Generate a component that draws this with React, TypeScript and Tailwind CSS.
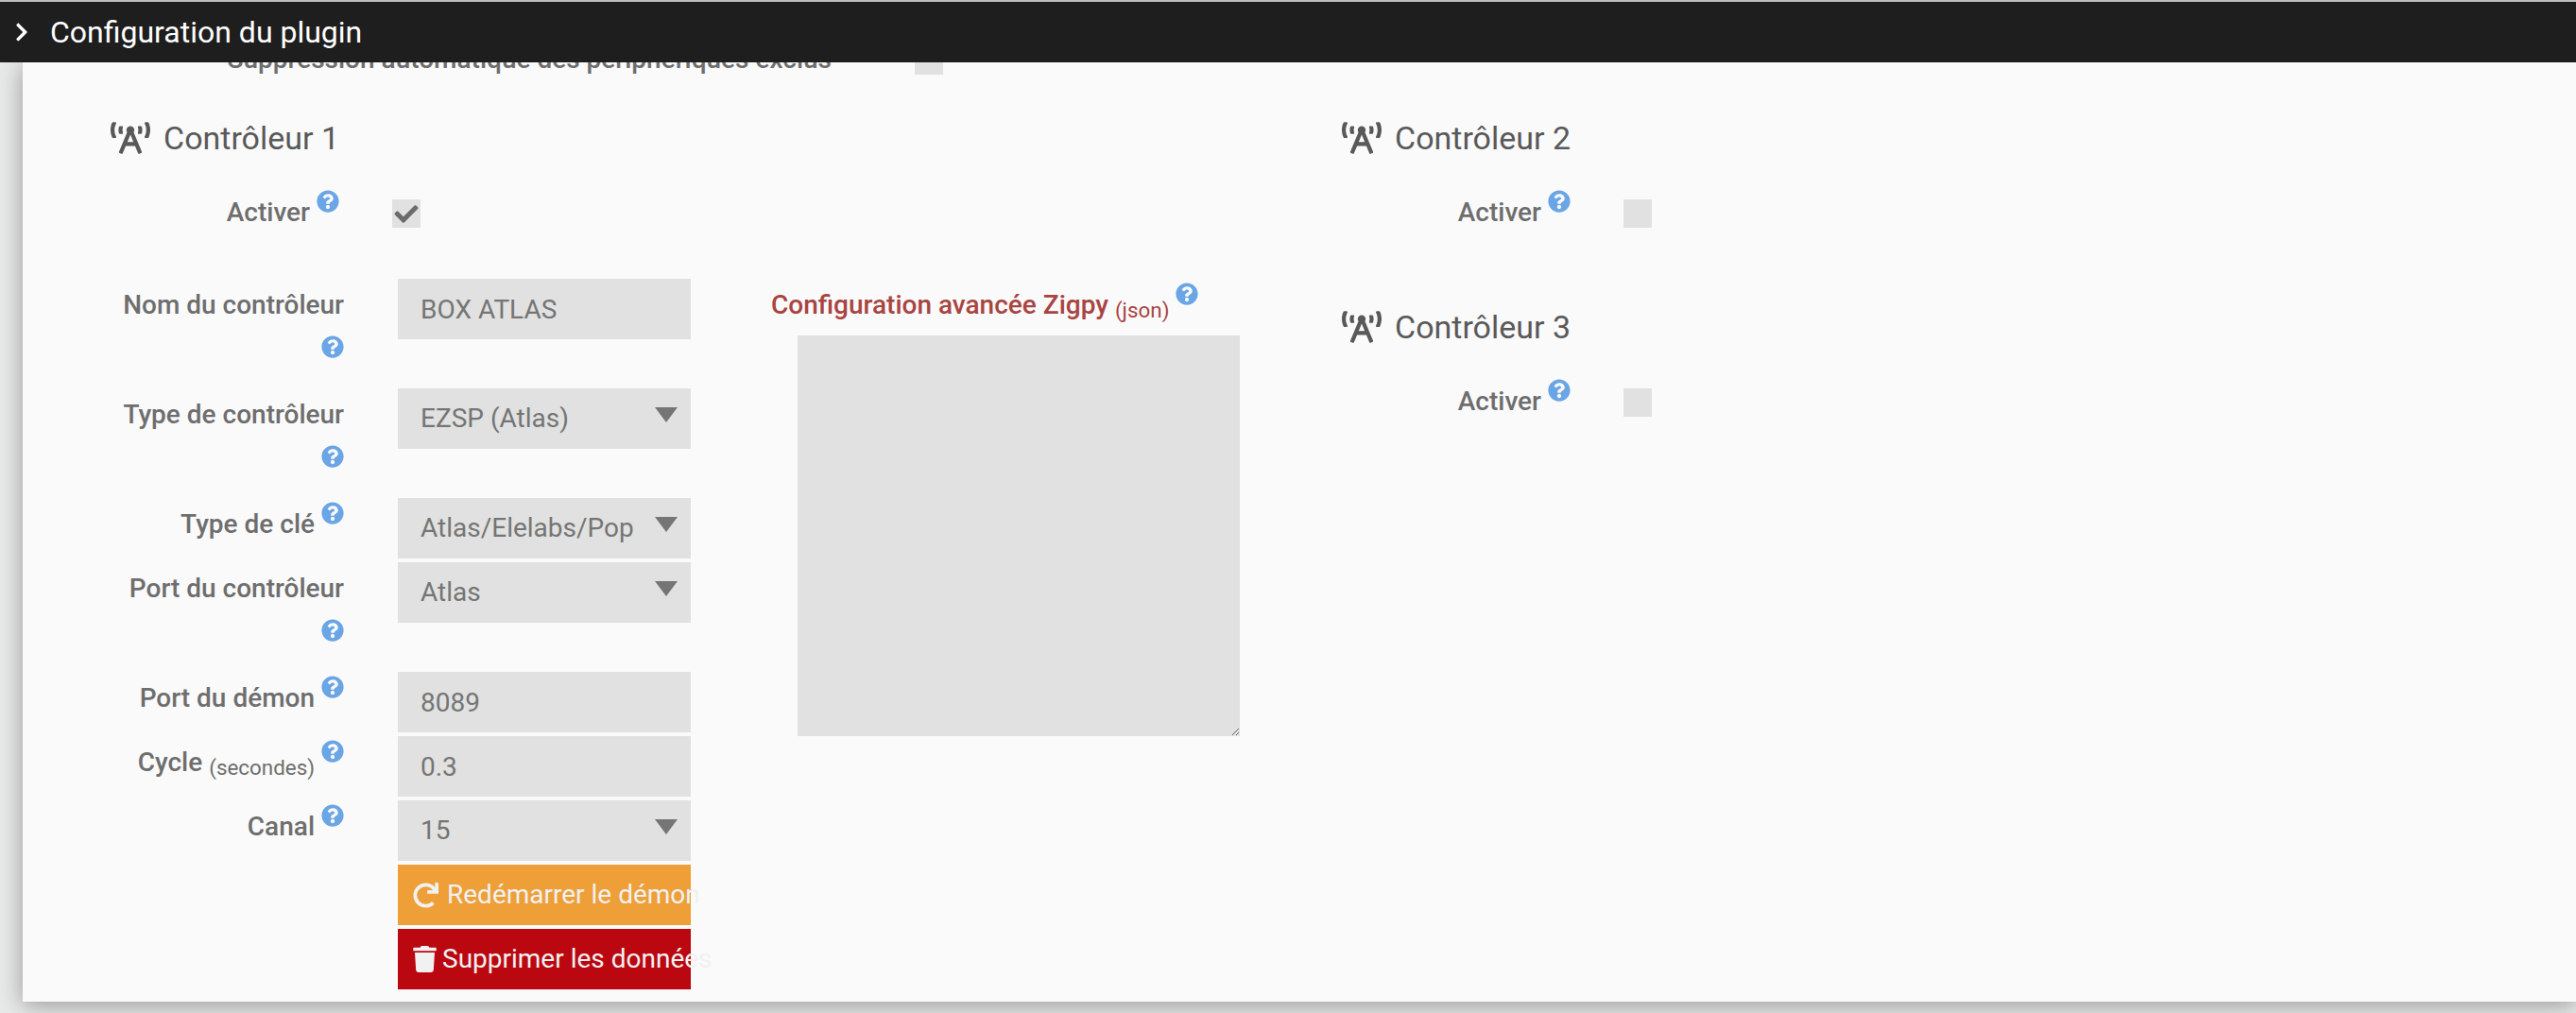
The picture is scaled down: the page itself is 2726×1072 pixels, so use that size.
import { FaBroadcastTower, FaCheck, FaChevronRight, FaQuestionCircle, FaRedo, FaTrash } from "react-icons/fa";

function Help() {
  return <FaQuestionCircle className="inline-block align-[9px] w-6 h-6 text-[#6aa5e6]" />;
}

function Label({ children, className = "" }: { children: React.ReactNode; className?: string }) {
  return (
    <label className={`block text-right text-[28px] leading-[56px] font-medium text-[#6e6e6e] ${className}`}>
      {children} <Help />
    </label>
  );
}

function Title({ n }: { n: number }) {
  return (
    <div className="flex items-end h-[34px] text-[34px] leading-[34px] text-[#595959]">
      <FaBroadcastTower className="shrink-0 w-[42px] h-[34px] mr-[14px]" />
      <span>Contrôleur {n}</span>
    </div>
  );
}

function Check({ checked = false }: { checked?: boolean }) {
  return (
    <span className="mt-[14px] flex items-center justify-center w-[30px] h-[30px] bg-[#e0e1e0] text-[#6b6b6b]">
      {checked && <FaCheck className="w-[28px] h-[25px]" />}
    </span>
  );
}

function Activer({ checked = false }: { checked?: boolean }) {
  return (
    <div className="flex mt-[34px]">
      <Label className="w-[242px]">Activer</Label>
      <div className="ml-[56px]">
        <Check checked={checked} />
      </div>
    </div>
  );
}

const control = "block w-[310px] h-16 pl-6 bg-[#e0e1e0] text-[28px] text-[#757575] outline-none rounded-none";

function Row({ label, children }: { label: React.ReactNode; children: React.ReactNode }) {
  return (
    <div className="flex mb-1">
      <Label className="w-[247px] shrink-0">{label}</Label>
      <div className="ml-[57px] w-[310px]">{children}</div>
    </div>
  );
}

function TextInput({ value }: { value: string }) {
  return <input readOnly value={value} className={control} />;
}

function Select({ value }: { value: string }) {
  return (
    <div className="relative">
      <select defaultValue={value} className={`${control} appearance-none pr-[46px]`}>
        <option>{value}</option>
      </select>
      <span className="absolute right-[14px] top-5 w-0 h-0 border-x-[12px] border-x-transparent border-t-[16px] border-t-[#757575]" />
    </div>
  );
}

function Btn({ bg, icon, gap, text }: { bg: string; icon: React.ReactNode; gap: string; text: string }) {
  return (
    <div className={`flex items-center h-16 pl-4 mb-1 whitespace-nowrap text-[28px] text-[#f1f1f1] ${bg} ${gap}`}>
      {icon}
      <span>{text}</span>
    </div>
  );
}

export default function App() {
  return (
    <div className="relative h-[1072px] overflow-hidden bg-[#e8eae9] font-['Roboto',sans-serif]">
      <div className="h-[2px] bg-[#bdbdbd]" />
      <header className="relative z-10 flex items-center h-16 bg-[#1e1e1e] text-white text-[32px]">
        <FaChevronRight className="shrink-0 ml-[15px] w-[16px] h-[22px]" />
        <span className="ml-[22px]">Configuration du plugin</span>
      </header>

      <main className="flow-root ml-6 h-[994px] pl-[93px] bg-[#fafafa] shadow-[0_4px_24px_rgba(0,0,0,0.35)]">
        <div className="flex -mt-[31px] h-[94px]">
          <label className="block w-[763px] text-right text-[28px] leading-[56px] font-medium text-[#6e6e6e]">
            Suppression automatique des périphériques exclus
          </label>
          <div className="ml-[88px]">
            <Check />
          </div>
        </div>

        <div className="flex">
          <section className="w-[1303px] shrink-0">
            <Title n={1} />
            <Activer checked />
            <div className="flex mt-[42px]">
              <div className="w-[614px] shrink-0">
                <Row label="Nom du contrôleur"><TextInput value="BOX ATLAS" /></Row>
                <Row label="Type de contrôleur"><Select value="EZSP (Atlas)" /></Row>
                <Row label="Type de clé"><Select value="Atlas/Elelabs/Pop" /></Row>
                <Row label="Port du contrôleur"><Select value="Atlas" /></Row>
                <Row label="Port du démon"><TextInput value="8089" /></Row>
                <Row label={<>Cycle <small className="text-[22.4px] font-normal align-[-4px]">(secondes)</small></>}>
                  <TextInput value="0.3" />
                </Row>
                <Row label="Canal"><Select value="15" /></Row>
                <div className="ml-[304px] w-[310px]">
                  <Btn bg="bg-[#ef9f38]" gap="gap-[9px]" icon={<FaRedo className="shrink-0 w-[27px] h-[27px]" />} text="Redémarrer le démon" />
                  <Btn bg="bg-[#bb0710]" gap="gap-[6px]" icon={<FaTrash className="shrink-0 w-[25px] h-[28px]" />} text="Supprimer les données" />
                </div>
              </div>
              <div className="ml-[85px]">
                <div className="h-14 text-[28px] leading-[56px] font-medium text-[#a94442] whitespace-nowrap">
                  Configuration avancée Zigpy <small className="text-[22.4px] font-normal align-[-4px]">(json)</small> <Help />
                </div>
                <textarea readOnly className="block mt-1 ml-7 w-[468px] h-[424px] bg-[#e0e1e0] outline-none" />
              </div>
            </div>
          </section>
          <section>
            <Title n={2} />
            <Activer />
            <div className="mt-[76px]">
              <Title n={3} />
              <Activer />
            </div>
          </section>
        </div>
      </main>
    </div>
  );
}
